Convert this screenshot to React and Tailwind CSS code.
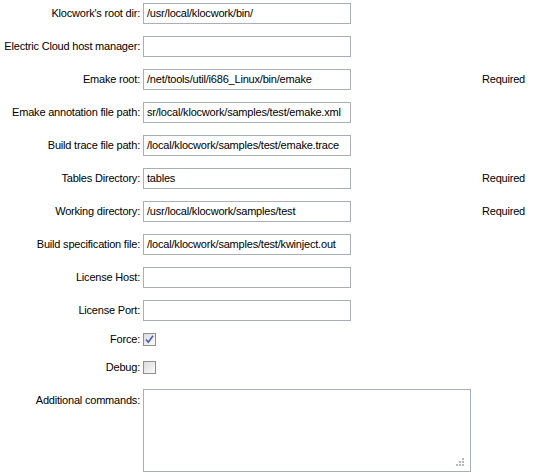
const rows = [
  { label: "Klocwork's root dir:", value: '/usr/local/klocwork/bin/' },
  { label: 'Electric Cloud host manager:', value: '' },
  { label: 'Emake root:', value: '/net/tools/util/i686_Linux/bin/emake', required: true },
  { label: 'Emake annotation file path:', value: 'sr/local/klocwork/samples/test/emake.xml' },
  { label: 'Build trace file path:', value: '/local/klocwork/samples/test/emake.trace' },
  { label: 'Tables Directory:', value: 'tables', required: true },
  { label: 'Working directory:', value: '/usr/local/klocwork/samples/test', required: true },
  { label: 'Build specification file:', value: '/local/klocwork/samples/test/kwinject.out' },
  { label: 'License Host:', value: '' },
  { label: 'License Port:', value: '' },
];

const Checkbox = ({ checked }) => (
  <div className="w-[13px] h-[13px] border border-[#8e8f8f] bg-gradient-to-br from-[#dcdcdc] to-[#fbfbfb] flex items-center justify-center">
    {checked && (
      <svg width="9" height="9" viewBox="0 0 9 9">
        <path d="M1 4.5 L3.3 7.2 L8 0.8" fill="none" stroke="#4a5fa8" strokeWidth="1.6" />
      </svg>
    )}
  </div>
);

const App = () => {
  return (
    <div className="w-[533px] h-[476px] bg-white text-[11px] tracking-[-0.2px] text-black pt-[3px]" style={{ fontFamily: '"Liberation Sans", Arial, sans-serif' }}>
      <div className="flex flex-col gap-[12px]">
        {rows.map(r => (
          <div key={r.label} className="flex items-center h-[21px]">
            <div className="w-[140px] text-right whitespace-nowrap">{r.label}</div>
            <div className="ml-[3px] w-[208px] h-[21px] border border-[#a9aeb8] bg-white px-[3px] flex items-center overflow-hidden whitespace-nowrap">
              {r.value}
            </div>
            {r.required && <div className="ml-[131px]">Required</div>}
          </div>
        ))}
      </div>

      <div className="flex items-center mt-[12px] h-[13px]">
        <div className="w-[140px] text-right">Force:</div>
        <div className="ml-[3px]"><Checkbox checked /></div>
      </div>
      <div className="flex items-center mt-[15px] h-[13px]">
        <div className="w-[140px] text-right">Debug:</div>
        <div className="ml-[3px]"><Checkbox /></div>
      </div>

      <div className="flex items-start mt-[15px]">
        <div className="w-[140px] text-right pt-[3px]">Additional commands:</div>
        <div className="ml-[3px] w-[328px] h-[83px] border border-[#a9aeb8] relative">
          <div className="absolute right-[6px] bottom-[5px] grid grid-cols-3 gap-[1px]">
            <span className="w-[2px] h-[2px]" />
            <span className="w-[2px] h-[2px]" />
            <span className="w-[2px] h-[2px] bg-[#b8b8b8]" />
            <span className="w-[2px] h-[2px]" />
            <span className="w-[2px] h-[2px] bg-[#b8b8b8]" />
            <span className="w-[2px] h-[2px] bg-[#b8b8b8]" />
            <span className="w-[2px] h-[2px] bg-[#b8b8b8]" />
            <span className="w-[2px] h-[2px] bg-[#b8b8b8]" />
            <span className="w-[2px] h-[2px] bg-[#b8b8b8]" />
          </div>
        </div>
      </div>
    </div>
  );
};

export default App;
